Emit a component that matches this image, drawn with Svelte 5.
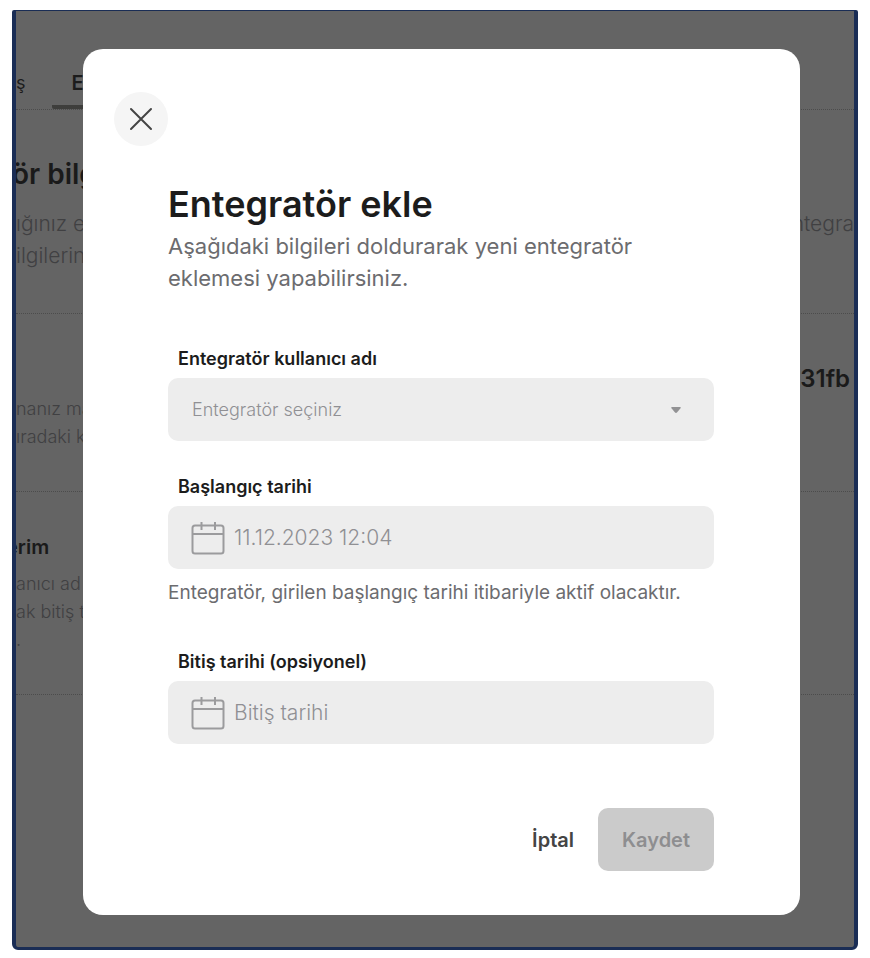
<script>
	let integrator = '';
	let startDate = '11.12.2023 12:04';
	let endDate = '';
	let open = true;

	const close = () => {
		open = false;
	};
</script>

{#snippet calendar()}
	<svg class="calendar" viewBox="0 0 34 34" aria-hidden="true">
		<rect x="1.500" y="4.500" width="31" height="28" rx="2.5" />
		<path d="M1.500 13H32.500M10.500 1V9M24 1V9" />
	</svg>
{/snippet}

<div class="screen">
	<main class="page">
		<nav class="tabs">
			<a class="tab" href="#s">ş</a>
			<a class="tab active" href="#e">E</a>
		</nav>
		<section class="intro">
			<h1>ör bilg</h1>
			<div class="row">
				<p>ığınız e<br />ilgilerin</p>
				<p>ntegra</p>
			</div>
		</section>
		<section class="company">
			<strong class="code">31fb</strong>
			<p class="small">nanız ma<br />ıradaki k</p>
		</section>
		<section class="settings">
			<h2>erim</h2>
			<p class="small">anıcı ad<br />ak bitiş t<br />.</p>
		</section>
	</main>

	{#if open}
		<div class="modal" role="dialog" aria-labelledby="modal-title">
			<button class="btn-close" aria-label="Kapat" on:click={close}>
				<svg viewBox="0 0 24 24" aria-hidden="true">
					<path d="M2 2L22 22M22 2L2 22" />
				</svg>
			</button>

			<form on:submit|preventDefault={close}>
				<h2 id="modal-title" class="title">Entegratör ekle</h2>
				<p class="lead">Aşağıdaki bilgileri doldurarak yeni entegratör eklemesi yapabilirsiniz.</p>

				<div class="group">
					<label for="integrator">Entegratör kullanıcı adı</label>
					<div class="field">
						<select id="integrator" bind:value={integrator}>
							<option value="">Entegratör seçiniz</option>
						</select>
						<svg class="caret" viewBox="0 0 10 6" aria-hidden="true">
							<path d="M1 0H9Q10.500 0 9.500 1.300L6.200 5.300Q5 6.500 3.800 5.300L0.500 1.300Q-0.500 0 1 0Z" />
						</svg>
					</div>
				</div>

				<div class="group">
					<label for="start">Başlangıç tarihi</label>
					<div class="field date">
						{@render calendar()}
						<input id="start" type="text" bind:value={startDate} />
					</div>
					<p class="help">Entegratör, girilen başlangıç tarihi itibariyle aktif olacaktır.</p>
				</div>

				<div class="group last">
					<label for="end">Bitiş tarihi (opsiyonel)</label>
					<div class="field date">
						{@render calendar()}
						<input id="end" type="text" placeholder="Bitiş tarihi" bind:value={endDate} />
					</div>
				</div>

				<div class="actions">
					<button type="button" class="btn-cancel" on:click={close}>İptal</button>
					<button type="submit" class="btn-save" disabled>Kaydet</button>
				</div>
			</form>
		</div>
	{/if}
</div>

<style>
	:global(body) {
		background: #fff;
		font-family: Inter, 'Liberation Sans', sans-serif;
	}

	.screen {
		display: grid;
		margin: 10px 12px 8px;
		border: solid #1a2d55;
		border-width: 1px 4px 3px;
		border-radius: 2px 2px 6px 6px;
		background: #646464;
		overflow: hidden;
	}

	/* page and modal share one cell, modal on top */
	.page,
	.modal {
		grid-area: 1 / 1;
	}

	h1,
	h2,
	p {
		margin: 0;
	}

	.page {
		min-width: 0;
		color: #404042;
	}
	.tabs {
		display: flex;
		gap: 26px;
		height: 98px;
		border-bottom: 1px dotted #4c4c4c;
	}
	.tab {
		box-sizing: border-box;
		padding-top: 60px;
		font-size: 18px;
		line-height: 24px;
		color: #1c1c1c;
		text-decoration: none;
	}
	.tab.active {
		padding-left: 20px;
		width: 100px;
		font-size: 20px;
		font-weight: 600;
		border-bottom: 4px solid #3e3e3c;
		border-radius: 2px;
	}

	section {
		border-bottom: 1px dotted #4c4c4c;
	}
	.intro {
		height: 203px;
	}
	h1 {
		padding: 46px 0 16px;
		margin-left: -4px;
		font-size: 28px;
		line-height: 36px;
		font-weight: 600;
		color: #1a1a1a;
	}
	.row {
		display: flex;
		justify-content: space-between;
		font-size: 21px;
		line-height: 32px;
		font-weight: 300;
	}
	.company {
		height: 177px;
	}
	.code {
		display: block;
		padding: 49px 4px 0 0;
		font-size: 24px;
		line-height: 32px;
		font-weight: 600;
		text-align: right;
		color: #1a1a1a;
	}
	.small {
		font-size: 18px;
		line-height: 28px;
		font-weight: 300;
	}
	.settings {
		height: 202px;
	}
	.settings h2 {
		padding: 42px 0 10px;
		margin-left: -10px;
		font-size: 20px;
		line-height: 26px;
		font-weight: 600;
		color: #1a1a1a;
	}

	.modal {
		margin: 38px 54px 32px 67px;
		padding: 43px 31px 44px;
		border-radius: 20px;
		background: #fff;
	}
	form {
		padding: 36px 55px 0 54px;
	}

	button {
		border: 0;
		font-family: inherit;
		cursor: pointer;
	}
	.btn-close {
		display: grid;
		place-items: center;
		width: 54px;
		height: 54px;
		padding: 0;
		border-radius: 50%;
		background: #f5f5f5;
	}
	.btn-close svg {
		width: 24px;
		height: 24px;
		fill: none;
		stroke: #444;
		stroke-width: 2;
		stroke-linecap: round;
	}

	.title {
		font-size: 36px;
		line-height: 44px;
		font-weight: 600;
		color: #1c1c1c;
	}
	.lead {
		margin: 4px 0 53px;
		font-size: 22px;
		line-height: 32px;
		color: #6c6c6f;
	}

	.group {
		margin-bottom: 34px;
	}
	.group.last {
		margin: 45px 0 64px;
	}
	label {
		display: block;
		padding-left: 10px;
		margin-bottom: 7px;
		font-size: 18px;
		line-height: 24px;
		font-weight: 600;
		color: #1c1c1c;
	}
	.field {
		display: flex;
		align-items: center;
		height: 63px;
		padding: 0 24px 0 23px;
		border-radius: 10px;
		background: #ededed;
		color: #909094;
	}
	select,
	input {
		flex: 1;
		min-width: 0;
		padding: 0;
		border: 0;
		outline: 0;
		background: none;
		font-family: inherit;
		font-weight: 300;
		color: inherit;
	}
	select {
		appearance: none;
		padding-left: 1px;
		font-size: 18px;
		line-height: 24px;
	}
	.caret {
		width: 10px;
		height: 6px;
		margin-right: 9px;
		fill: #929294;
	}
	.date {
		gap: 9px;
	}
	input {
		font-size: 21px;
		line-height: 28px;
	}
	input::placeholder {
		color: inherit;
		opacity: 1;
	}
	.calendar {
		width: 34px;
		height: 34px;
		fill: none;
		stroke: #9b9b9d;
		stroke-width: 2;
	}
	.help {
		margin-top: 12px;
		font-size: 19px;
		line-height: 24px;
		color: #6c6c6f;
	}

	.actions {
		display: flex;
		justify-content: flex-end;
		gap: 4px;
	}
	.actions button {
		height: 63px;
		font-size: 20px;
		font-weight: 600;
	}
	.btn-cancel {
		padding: 0 20px;
		background: none;
		color: #444;
	}
	.btn-save {
		padding: 0 24px;
		border-radius: 10px;
		background: #cbcbcb;
		color: #8e8e90;
	}
</style>
